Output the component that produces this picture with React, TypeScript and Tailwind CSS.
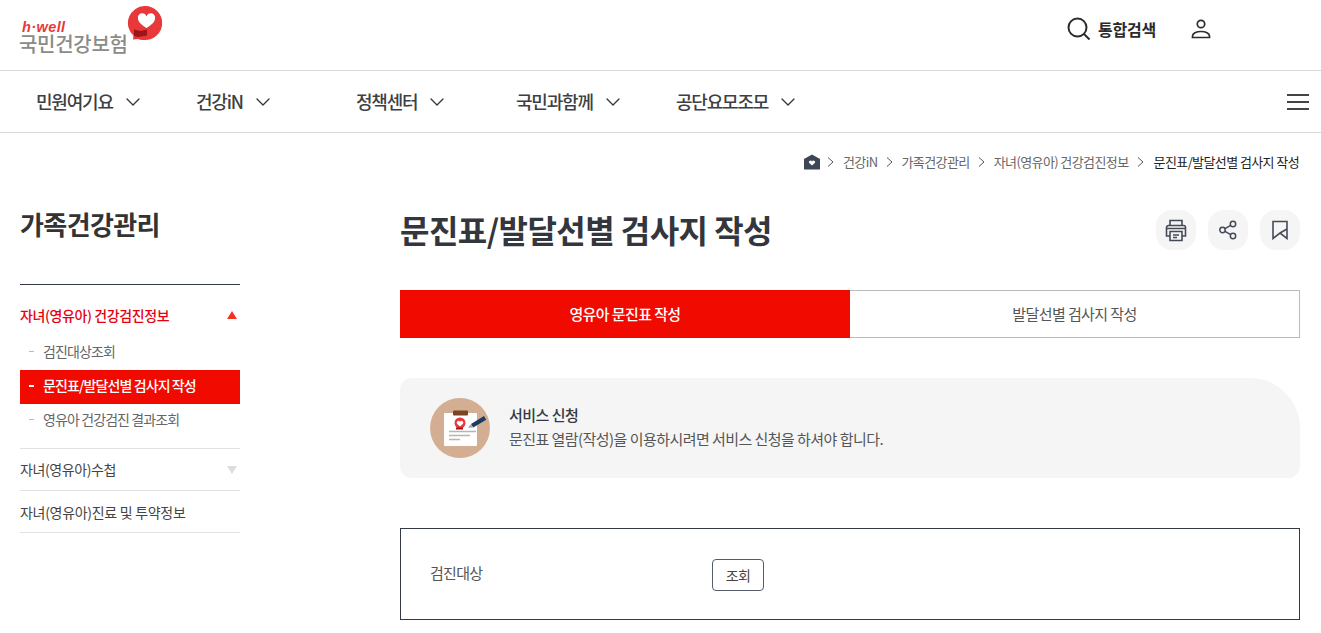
import { ChevronDown } from 'lucide-react'

const font = { fontFamily: '"Noto Sans CJK KR", "Noto Sans", sans-serif' }

const navItems = ['민원여기요', '건강iN', '정책센터', '국민과함께', '공단요모조모']

const crumbs = ['건강iN', '가족건강관리', '자녀(영유아) 건강검진정보']

function Logo() {
    return (
        <div className="relative h-[70px] w-[170px]">
            <span className="absolute left-[22px] top-[20px] font-['Liberation_Sans'] text-[14.5px] font-bold italic leading-[14px] tracking-[0.4px] text-[#e8383a]">
                h·well
            </span>
            <span className="absolute left-[19px] top-[34px] text-[20px] font-medium leading-[20px] tracking-[-0.3px] text-[#8a8c87]">
                국민건강보험
            </span>
            <svg className="absolute left-[127px] top-[6px]" width="35" height="34" viewBox="0 0 35 34">
                <path d="M17.500 0a17 17 0 1 1-1 33.900c-2 0-4-.4-5.500-1L6 33.500l.4-4A17 17 0 0 1 17.500 0z" fill="#e8383a" />
                <path d="M19.500 22c-5.500-3.500-8.500-6.300-8.500-9.500a4.300 4.300 0 0 1 8.500-2 4.300 4.300 0 0 1 8.500 2c0 3.200-3 6-8.500 9.500z" fill="#fff" />
                <path d="M7 23.500l6.500 1.500 6.500-1.500v6l-9 1.500-4-1z" fill="#9c1518" />
            </svg>
        </div>
    )
}

function SearchIcon() {
    return (
        <svg width="24" height="24" viewBox="0 0 24 24" fill="none" stroke="#2b2b2b" strokeWidth="2">
            <circle cx="10.500" cy="10.500" r="9" />
            <path d="M17 17l5.500 5.500" />
        </svg>
    )
}

function UserIcon() {
    return (
        <svg width="20" height="20" viewBox="0 0 20 20" fill="none" stroke="#2b2b2b" strokeWidth="1.700">
            <circle cx="10" cy="5" r="3.700" />
            <path d="M1.500 18.500h17v-1.500c0-2.600-3.800-4.500-8.500-4.500s-8.500 1.900-8.500 4.500z" />
        </svg>
    )
}

function CrumbArrow() {
    return (
        <svg width="7" height="10" viewBox="0 0 7 10" fill="none" stroke="#555" strokeWidth="1">
            <path d="M1 .5l5 4.500-5 4.500" />
        </svg>
    )
}

function ClipboardBadge() {
    return (
        <svg width="60" height="60" viewBox="0 0 60 60">
            <circle cx="30" cy="30" r="30" fill="#d3ae92" />
            <rect x="14" y="15" width="33" height="33" rx="1" fill="#fff" />
            <rect x="23" y="12.500" width="15" height="5" rx="1" fill="#7a4526" />
            <circle cx="30" cy="25" r="5.500" fill="#e8383a" />
            <path d="M30 28.500l-3-2.800a1.700 1.700 0 0 1 3-2 1.700 1.700 0 0 1 3 2z" fill="#fff" />
            <path d="M26 29.500h7v2h-7z" fill="#9c1518" />
            <path d="M19 33.500h27M19 37.500h21M19 41.500h11" stroke="#b5b5b5" strokeWidth="1.300" />
            <path d="M41 26l13-8 2.200 3.800-13 7.700z" fill="#1d3a63" />
            <path d="M41 26l-3 3.800 5-.3z" fill="#9aa5b5" />
        </svg>
    )
}

function Round({ children }: { children: React.ReactNode }) {
    return (
        <button className="flex h-10 w-10 items-center justify-center rounded-2xl bg-[#f5f5f5]">
            {children}
        </button>
    )
}

export default function App() {
    return (
        <div style={font} className="h-[633px] w-[1321px] overflow-hidden bg-white text-[#333]">
            {/* top */}
            <header className="flex h-[71px] items-start justify-between border-b border-[#d9d9d9]">
                <Logo />
                <div className="flex items-center pr-[110px] pt-[17px]">
                    <SearchIcon />
                    <span className="ml-[7px] text-[16px] font-bold leading-[24px] tracking-[-0.2px] text-[#2b2b2b]">통합검색</span>
                    <span className="ml-[35px]"><UserIcon /></span>
                </div>
            </header>
            <nav className="flex h-[62px] items-center border-b border-[#d9d9d9] pl-[36px] pr-[12px]">
                {navItems.map((label) => (
                    <div key={label} className="flex w-[160px] items-center gap-[8px]">
                        <span className="text-[18px] font-medium tracking-[-1.2px] text-[#3d3f44]">{label}</span>
                        <ChevronDown size={24} strokeWidth={1.300} className="text-[#333]" />
                    </div>
                ))}
                <div className="ml-auto flex w-[22px] flex-col gap-[5px]">
                    <span className="h-[2px] bg-[#444]" />
                    <span className="h-[2px] bg-[#444]" />
                    <span className="h-[2px] bg-[#444]" />
                </div>
            </nav>

            {/* breadcrumb */}
            <div className="flex h-[58px] items-center justify-end pr-[22px] text-[13px] tracking-[-0.6px] text-[#666]">
                <svg width="16" height="16" viewBox="0 0 16 16" className="mr-[7px]">
                    <path d="M0 5l8-4.500L16 5v10.500H0z" fill="#3f4658" />
                    <path d="M8 11.500L5 8.800a1.600 1.600 0 0 1 3-1.300 1.600 1.600 0 0 1 3 1.300z" fill="#fff" />
                </svg>
                {crumbs.map((c) => (
                    <span key={c} className="flex items-center">
                        <CrumbArrow />
                        <span className="ml-[9px] mr-[8px]">{c}</span>
                    </span>
                ))}
                <CrumbArrow />
                <span className="ml-[10px] text-[#222]">문진표/발달선별 검사지 작성</span>
            </div>

            <div className="flex pl-5 pr-[21px]">
                {/* sidebar */}
                <aside className="w-[220px] shrink-0">
                    <h2 className="mt-[14px] h-[79px] text-[26px] font-bold leading-[38px] tracking-[-0.6px] text-[#333]">가족건강관리</h2>
                    <div className="border-t border-[#333a45] pt-[19px]">
                        <div className="flex items-center justify-between pr-[3px]">
                            <span className="text-[14px] font-medium leading-[22px] tracking-[-0.4px] text-[#e60012]">자녀(영유아) 건강검진정보</span>
                            <span className="h-0 w-0 border-x-[5.500px] border-b-[8px] border-x-transparent border-b-[#f0341f]" />
                        </div>
                        <ul className="mt-[10px] text-[14px] tracking-[-0.9px]">
                            <li className="flex h-[34px] items-center pb-[3px] text-[#666]">
                                <span className="ml-[9px] mr-[9px] h-[1.500px] w-[5px] bg-[#bbb]" />검진대상조회
                            </li>
                            <li className="flex h-[34px] items-center bg-[#f00a00] pb-[3px] font-medium text-white">
                                <span className="ml-[9px] mr-[9px] h-[2px] w-[5px] bg-white" />문진표/발달선별 검사지 작성
                            </li>
                            <li className="flex h-[34px] items-center pb-[3px] text-[#666]">
                                <span className="ml-[9px] mr-[9px] h-[1.500px] w-[5px] bg-[#bbb]" />영유아 건강검진 결과조회
                            </li>
                        </ul>
                        <div className="mt-[10px] flex h-[42px] items-center justify-between border-t border-[#e2e2e2] pr-[3px] text-[14px] tracking-[-0.4px] text-[#444]">
                            <span>자녀(영유아)수첩</span>
                            <span className="h-0 w-0 border-x-[5.500px] border-t-[8px] border-x-transparent border-t-[#ddd]" />
                        </div>
                        <div className="flex h-[43px] items-center border-y border-[#e2e2e2] pt-[1px] text-[14px] tracking-[-0.3px] text-[#444]">
                            자녀(영유아)진료 및 투약정보
                        </div>
                    </div>
                </aside>

                {/* main */}
                <main className="ml-[160px] flex-1">
                    <div className="mt-[19px] flex h-[40px] items-center justify-between">
                        <h1 className="pb-[2px] text-[32px] font-bold tracking-[-0.55px] text-[#33363d]">문진표/발달선별 검사지 작성</h1>
                        <div className="flex gap-3">
                            <Round>
                                <svg width="24" height="24" viewBox="0 0 24 24" fill="none" stroke="#464b5a" strokeWidth="1.600">
                                    <path d="M6 7V2.500h12V7M6 18H2.500V9.500a2 2 0 0 1 2-2h15a2 2 0 0 1 2 2V18H18" />
                                    <path d="M6 13.500h12v9H6zM9 17h6M9 19.500h4M3 10.500h18" />
                                </svg>
                            </Round>
                            <Round>
                                <svg width="20" height="20" viewBox="0 0 20 20" fill="none" stroke="#464b5a" strokeWidth="1.500">
                                    <circle cx="4.500" cy="10" r="2.700" />
                                    <circle cx="15" cy="4" r="2.700" />
                                    <circle cx="15" cy="16" r="2.700" />
                                    <path d="M7 8.700l5.700-3.400M7 11.300l5.700 3.400" />
                                </svg>
                            </Round>
                            <Round>
                                <svg width="18" height="20" viewBox="0 0 18 20" fill="none" stroke="#464b5a" strokeWidth="1.600">
                                    <path d="M2 1.500h14v17L9 13l-7 5.500zM16 9l-7 4" />
                                </svg>
                            </Round>
                        </div>
                    </div>

                    <div className="mt-[40px] flex h-[48px] text-[15px] tracking-[-0.6px]">
                        <div className="flex w-1/2 items-center justify-center bg-[#f00a00] font-medium text-white">영유아 문진표 작성</div>
                        <div className="flex w-1/2 items-center justify-center border border-l-0 border-[#bbb] text-[#555]">발달선별 검사지 작성</div>
                    </div>

                    <div className="mt-[40px] flex h-[100px] items-center rounded-bl-xl rounded-br-xl rounded-tl-xl rounded-tr-[50px] bg-[#f5f5f5] pl-[30px]">
                        <ClipboardBadge />
                        <div className="ml-[19px] pb-[2px]">
                            <p className="text-[15px] font-medium leading-[24px] tracking-[-0.5px] text-[#333a45]">서비스 신청</p>
                            <p className="text-[15px] leading-[24px] tracking-[-0.55px] text-[#555]">문진표 열람(작성)을 이용하시려면 서비스 신청을 하셔야 합니다.</p>
                        </div>
                    </div>

                    <div className="mt-[50px] flex h-[92px] border border-[#333a45] pl-[29px] pt-[30px] text-[15px] tracking-[-0.7px] text-[#555]">
                        <span className="w-[282px] pt-[2px] leading-[24px]">검진대상</span>
                        <button className="h-[32px] w-[52px] rounded border border-[#555c6b] text-[14px] text-[#444]">조회</button>
                    </div>
                </main>
            </div>
        </div>
    )
}
